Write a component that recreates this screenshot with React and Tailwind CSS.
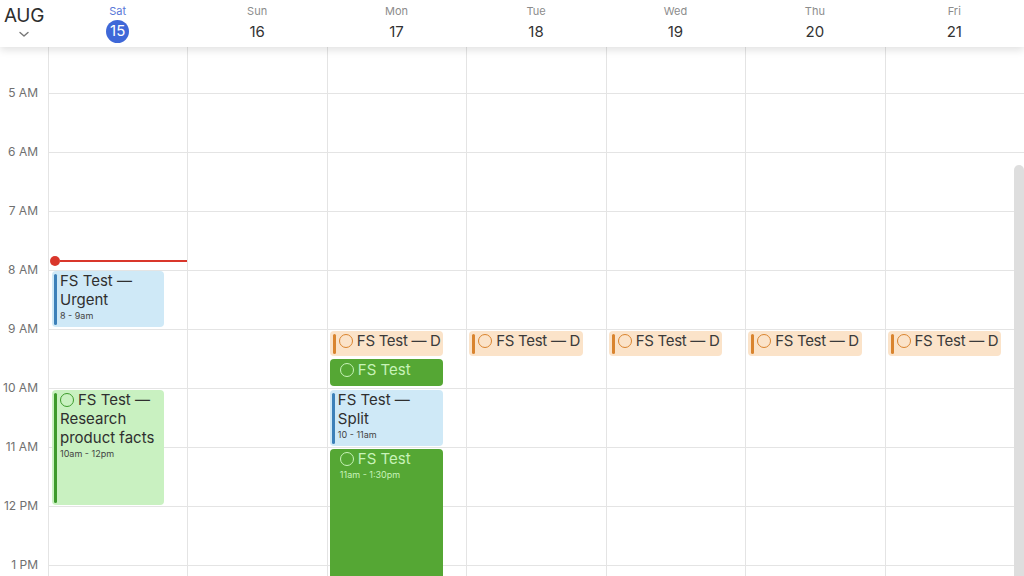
import React from "react";

const days = [
  { name: "Sat", num: "15", today: true },
  { name: "Sun", num: "16" },
  { name: "Mon", num: "17" },
  { name: "Tue", num: "18" },
  { name: "Wed", num: "19" },
  { name: "Thu", num: "20" },
  { name: "Fri", num: "21" },
];

const hours = ["5 AM", "6 AM", "7 AM", "8 AM", "9 AM", "10 AM", "11 AM", "12 PM", "1 PM"];

function Circle({ color }) {
  return (
    <span
      className="inline-block shrink-0 w-[14px] h-[14px] rounded-full border-[1.5px] mr-[4px]"
      style={{ borderColor: color }}
    />
  );
}

function Orange() {
  return (
    <div className="absolute left-[2px] right-[23px] top-[284px] h-[25px] rounded-[4px] bg-[#fbe3c9] overflow-hidden">
      <div className="absolute left-[3px] top-[3px] bottom-[2px] w-[3px] rounded-full bg-[#d9842f]" />
      <div className="flex items-center pl-[9px] text-[15px] leading-[19px] tracking-[-0.3px] text-[#3a3a3a] whitespace-nowrap">
        <Circle color="#d9842f" />
        <span>FS Test — D</span>
      </div>
    </div>
  );
}

function DayColumn({ children }) {
  return (
    <div className="relative border-l border-[#e4e4e4] min-w-0">
      <div className="h-[46px]" />
      {hours.map((h) => (
        <div key={h} className="h-[59px] border-t border-[#e4e4e4]" />
      ))}
      {children}
    </div>
  );
}

export default function App() {
  return (
    <div
      className="w-[1024px] h-[576px] overflow-hidden bg-white relative"
      style={{ fontFamily: "Inter, 'Liberation Sans', sans-serif" }}
    >
      {/* Header */}
      <div className="relative z-10 h-[47px] bg-white grid grid-cols-[48px_repeat(7,minmax(0,1fr))] shadow-[0_3px_8px_rgba(0,0,0,0.12)]">
        <div className="flex flex-col items-center pt-[5px]">
          <div className="text-[19px] leading-[22px] text-[#2e2e2e] tracking-[-0.3px]">AUG</div>
          <svg width="12" height="8" viewBox="0 0 12 8" className="mt-[3px]">
            <path d="M2 2.5 L6 6 L10 2.5" fill="none" stroke="#777" strokeWidth="1.4" strokeLinecap="round" strokeLinejoin="round" />
          </svg>
        </div>
        {days.map((d) => (
          <div key={d.name} className="flex flex-col items-center pt-[4px]">
            <div className={"text-[11px] leading-[14px] " + (d.today ? "text-[#5a78d8]" : "text-[#8c8c8c]")}>
              {d.name}
            </div>
            {d.today ? (
              <div className="mt-[2px] w-[23px] h-[23px] rounded-full bg-[#3f68d8] text-white text-[15px] flex items-center justify-center">
                {d.num}
              </div>
            ) : (
              <div className="mt-[2px] h-[23px] text-[15px] leading-[23px] text-[#333]">{d.num}</div>
            )}
          </div>
        ))}
      </div>

      {/* Body */}
      <div className="relative h-[529px] overflow-hidden">
        <div className="grid grid-cols-[48px_repeat(7,minmax(0,1fr))]">
          {/* gutter */}
          <div className="relative">
            <div className="h-[46px]" />
            {hours.map((h) => (
              <div key={h} className="relative h-[59px]">
                <div className="absolute right-[10px] top-0 -translate-y-1/2 text-[12px] leading-[14px] text-[#707070] whitespace-nowrap">
                  {h}
                </div>
              </div>
            ))}
          </div>

          {/* Sat */}
          <DayColumn>
            <div className="absolute left-[1px] right-0 top-[209px] h-[10px] flex items-center">
              <div className="w-[10px] h-[10px] rounded-full bg-[#d9362b] shrink-0" />
              <div className="flex-1 h-[2px] bg-[#d9362b]" />
            </div>
            <div className="absolute left-[3px] right-[23px] top-[224px] h-[56px] rounded-[4px] bg-[#cfe9f7] overflow-hidden">
              <div className="absolute left-[2px] top-[3px] bottom-[2px] w-[3px] rounded-full bg-[#3c80b9]" />
              <div className="pl-[8px] text-[15px] leading-[19px] text-[#2f2f2f]">
                <div>FS Test —</div>
                <div>Urgent</div>
                <div className="text-[9px] leading-[14px] text-[#444]">8 - 9am</div>
              </div>
            </div>
            <div className="absolute left-[3px] right-[23px] top-[343px] h-[115px] rounded-[4px] bg-[#c9f1c1] overflow-hidden">
              <div className="absolute left-[2px] top-[3px] bottom-[2px] w-[3px] rounded-full bg-[#3d9a2c]" />
              <div className="pl-[8px] text-[15px] leading-[19px] text-[#2f2f2f]">
                <div className="flex items-center">
                  <Circle color="#3d9a2c" />
                  <span>FS Test —</span>
                </div>
                <div>Research</div>
                <div>product facts</div>
                <div className="text-[9px] leading-[14px] text-[#444]">10am - 12pm</div>
              </div>
            </div>
          </DayColumn>

          {/* Sun */}
          <DayColumn />

          {/* Mon */}
          <DayColumn>
            <Orange />
            <div className="absolute left-[2px] right-[23px] top-[312px] h-[27px] rounded-[4px] bg-[#55a734] overflow-hidden">
              <div className="flex items-center pl-[10px] pt-[1px] text-[15px] leading-[19px] text-[#c8f3b9] whitespace-nowrap">
                <Circle color="#c8f3b9" />
                <span>FS Test</span>
              </div>
            </div>
            <div className="absolute left-[2px] right-[23px] top-[343px] h-[56px] rounded-[4px] bg-[#cfe9f7] overflow-hidden">
              <div className="absolute left-[2px] top-[3px] bottom-[2px] w-[3px] rounded-full bg-[#3c80b9]" />
              <div className="pl-[8px] text-[15px] leading-[19px] text-[#2f2f2f]">
                <div>FS Test —</div>
                <div>Split</div>
                <div className="text-[9px] leading-[14px] text-[#444]">10 - 11am</div>
              </div>
            </div>
            <div className="absolute left-[2px] right-[23px] top-[402px] h-[150px] rounded-[4px] bg-[#55a734] overflow-hidden">
              <div className="pl-[10px] text-[15px] leading-[19px] text-[#c8f3b9]">
                <div className="flex items-center">
                  <Circle color="#c8f3b9" />
                  <span>FS Test</span>
                </div>
                <div className="text-[9px] leading-[14px]">11am - 1:30pm</div>
              </div>
            </div>
          </DayColumn>

          {/* Tue-Fri */}
          <DayColumn>
            <Orange />
          </DayColumn>
          <DayColumn>
            <Orange />
          </DayColumn>
          <DayColumn>
            <Orange />
          </DayColumn>
          <DayColumn>
            <Orange />
          </DayColumn>
        </div>

        {/* scrollbar */}
        <div className="absolute right-0 top-[118px] bottom-0 w-[10px] rounded-tl-[5px] rounded-tr-[5px] bg-[#dedede]" />
      </div>
    </div>
  );
}
